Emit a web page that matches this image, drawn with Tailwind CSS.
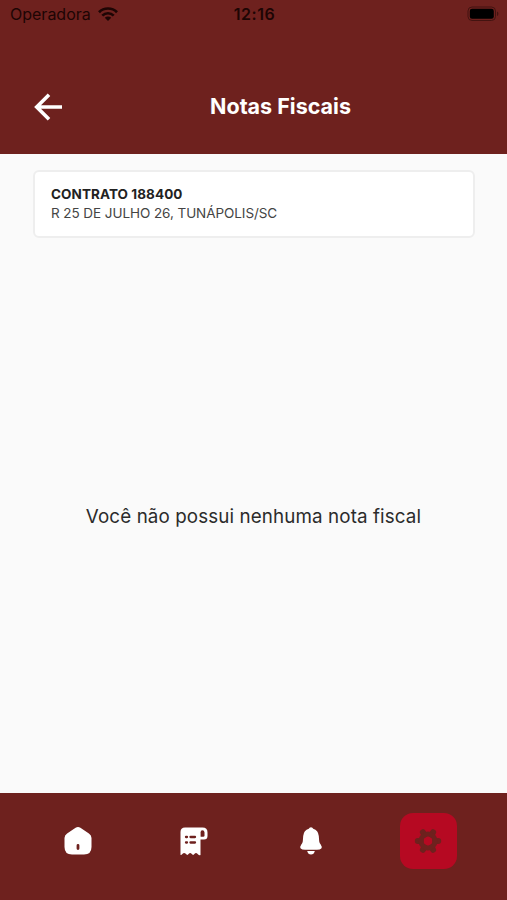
<!DOCTYPE html>
<html lang="pt-BR">
<head>
  <meta charset="UTF-8" />
  <meta name="viewport" content="width=device-width, initial-scale=1.0" />
  <title>Notas Fiscais</title>
  <script src="https://cdn.jsdelivr.net/npm/@tailwindcss/browser@4"></script>
</head>
<body class="h-screen flex flex-col overflow-hidden bg-[#fafafa] font-['Inter',sans-serif]">
  <header class="h-[154px] shrink-0 bg-[#6e211e] flex flex-col">
    <!-- Status bar -->
    <div class="h-7 grid grid-cols-3 items-center pl-[10px] pr-[8px] text-[#1d0504]">
      <div class="flex items-center gap-[7px]">
        <span class="text-[16px] leading-none">Operadora</span>
        <svg class="w-5 h-[14px]" viewBox="0 0 20 14" fill="none" stroke="currentColor" stroke-width="2.7">
          <path d="M1 5.2a12.8 12.8 0 0 1 18 0" />
          <path d="M4.3 8.6a8.1 8.1 0 0 1 11.4 0" />
          <path d="M10 14 6.8 10.8a4.5 4.5 0 0 1 6.4 0z" fill="currentColor" stroke="none" />
        </svg>
      </div>
      <span class="text-center text-[16px] leading-none font-semibold tracking-[0.5px]">12:16</span>
      <svg class="justify-self-end w-8 h-4" viewBox="0 0 32 16">
        <rect x="1" y="1" width="27.5" height="13.5" rx="4" fill="none" stroke="#431310" />
        <rect x="2.8" y="2.8" width="24" height="10" rx="2.3" fill="#000" />
        <path d="M30 5.5v4.6q1.4-.6 1.4-2.3T30 5.5" fill="#431310" />
      </svg>
    </div>

    <div class="mt-[55px] h-12 flex items-center text-white">
      <button class="ml-[34px] w-7" aria-label="Voltar">
        <svg class="w-7 h-7" viewBox="0 0 28 28" fill="none" stroke="currentColor" stroke-width="3.6">
          <path d="M28 14H3M15 1.7 2.7 14 15 26.3" />
        </svg>
      </button>
      <h1 class="flex-1 text-center pr-[8px] text-[21.5px] leading-none font-bold">Notas Fiscais</h1>
    </div>
  </header>

  <main class="flex-1 flex flex-col pl-[33px] pr-[32px] pt-[16px]">
    <section class="h-[68px] rounded-[6px] border-2 border-[#eeeeee] bg-white px-4 pt-[13px] text-[#222]">
      <h2 class="text-[13.5px] leading-[19px] font-bold tracking-[0.08px]">CONTRATO 188400</h2>
      <p class="text-[13.5px] leading-[19px] tracking-[-0.07px] text-[#444]">R 25 DE JULHO 26, TUNÁPOLIS/SC</p>
    </section>
    <div class="flex-1 flex items-center justify-center pt-[4px] pr-[1px]">
      <p class="text-[18.8px] leading-none text-[#2b2b2b] tracking-[0.11px] whitespace-nowrap">Você não possui nenhuma nota fiscal</p>
    </div>
  </main>

  <nav class="h-[107px] shrink-0 bg-[#6e211e] flex items-start justify-between px-[50px] pt-[20px] text-white">
    <a class="w-[56px] h-[56px] flex items-center justify-center">
      <svg class="w-7 h-7" viewBox="0 0 28 28" fill="currentColor">
        <path fill-rule="evenodd" d="M11.6.8q2.4-1.4 4.8 0l8.5 5.7Q27.5 8.2 27.5 11v9q0 7.5-7.5 7.5H8Q.5 27.5.5 20v-9q0-2.8 2.6-4.5zM14 17q-1.4 0-1.4 1.4v3.2q0 1.4 1.4 1.4t1.4-1.4v-3.2Q15.4 17 14 17z" />
      </svg>
    </a>
    <a class="w-[56px] h-[56px] flex items-center justify-center pr-[2px]">
      <svg class="w-7 h-[29px]" viewBox="0 0 28 29">
        <path d="M5 .5h17.5q5 0 5 5V9q0 3.500-3.500 3.500h-3.500V28q-1.800.7-3.100-1.200-1.400-1.800-2.800 0-1.500 2.200-3 0-1.400-1.800-2.800 0-1.500 2.200-3 0Q4 25 2.600 26.800 1.800 28 .5 28V5Q.5.5 5 .5z" fill="currentColor" />
        <path d="M20.600 9.800V5.500q0-2.200 1.700-2.200 2.200 0 2.200 2.200v3q0 1.300-1.300 1.300z" fill="#6e211e" />
        <path d="M6 10h1m3.500 0h4.500M6 15.500h1m3.500 0h4.500" fill="none" stroke="#6e211e" stroke-width="2.300" stroke-linecap="round" />
      </svg>
    </a>
    <a class="w-[56px] h-[56px] flex items-center justify-center">
      <svg class="w-6 h-7" viewBox="0 0 24 28" fill="currentColor">
        <path d="M12 .3q1.700 0 2.200 1.500 5 1.500 5.600 7.200l.4 5.200q.2 1.700 1.500 3.400 1.800 2.600.6 3.900-1.200 1.200-4.300 1.200H6q-3.100 0-4.300-1.200-1.200-1.300.6-3.900 1.300-1.700 1.500-3.400L4.200 9q.6-5.700 5.600-7.200Q10.300.3 12 .3z" />
        <path d="M8.200 24h7.600q-.8 3.500-3.800 3.500T8.200 24z" />
      </svg>
    </a>
    <a class="w-[57px] h-[56px] rounded-[13px] bg-[#b60922] flex items-center justify-center text-[#6e211e]">
      <svg class="w-7 h-7" viewBox="0 0 28 28">
        <g fill="none" stroke="currentColor" stroke-width="6" stroke-linecap="round">
          <path d="M3.800 14h3m14.400 0h3M8.900 5.200l1.500 2.500m7.200 12.600 1.500 2.500M19.100 5.200l-1.500 2.500m-7.200 12.600-1.500 2.500" />
          <circle cx="14" cy="14" r="7" stroke-width="5" />
        </g>
      </svg>
    </a>
  </nav>
</body>
</html>
